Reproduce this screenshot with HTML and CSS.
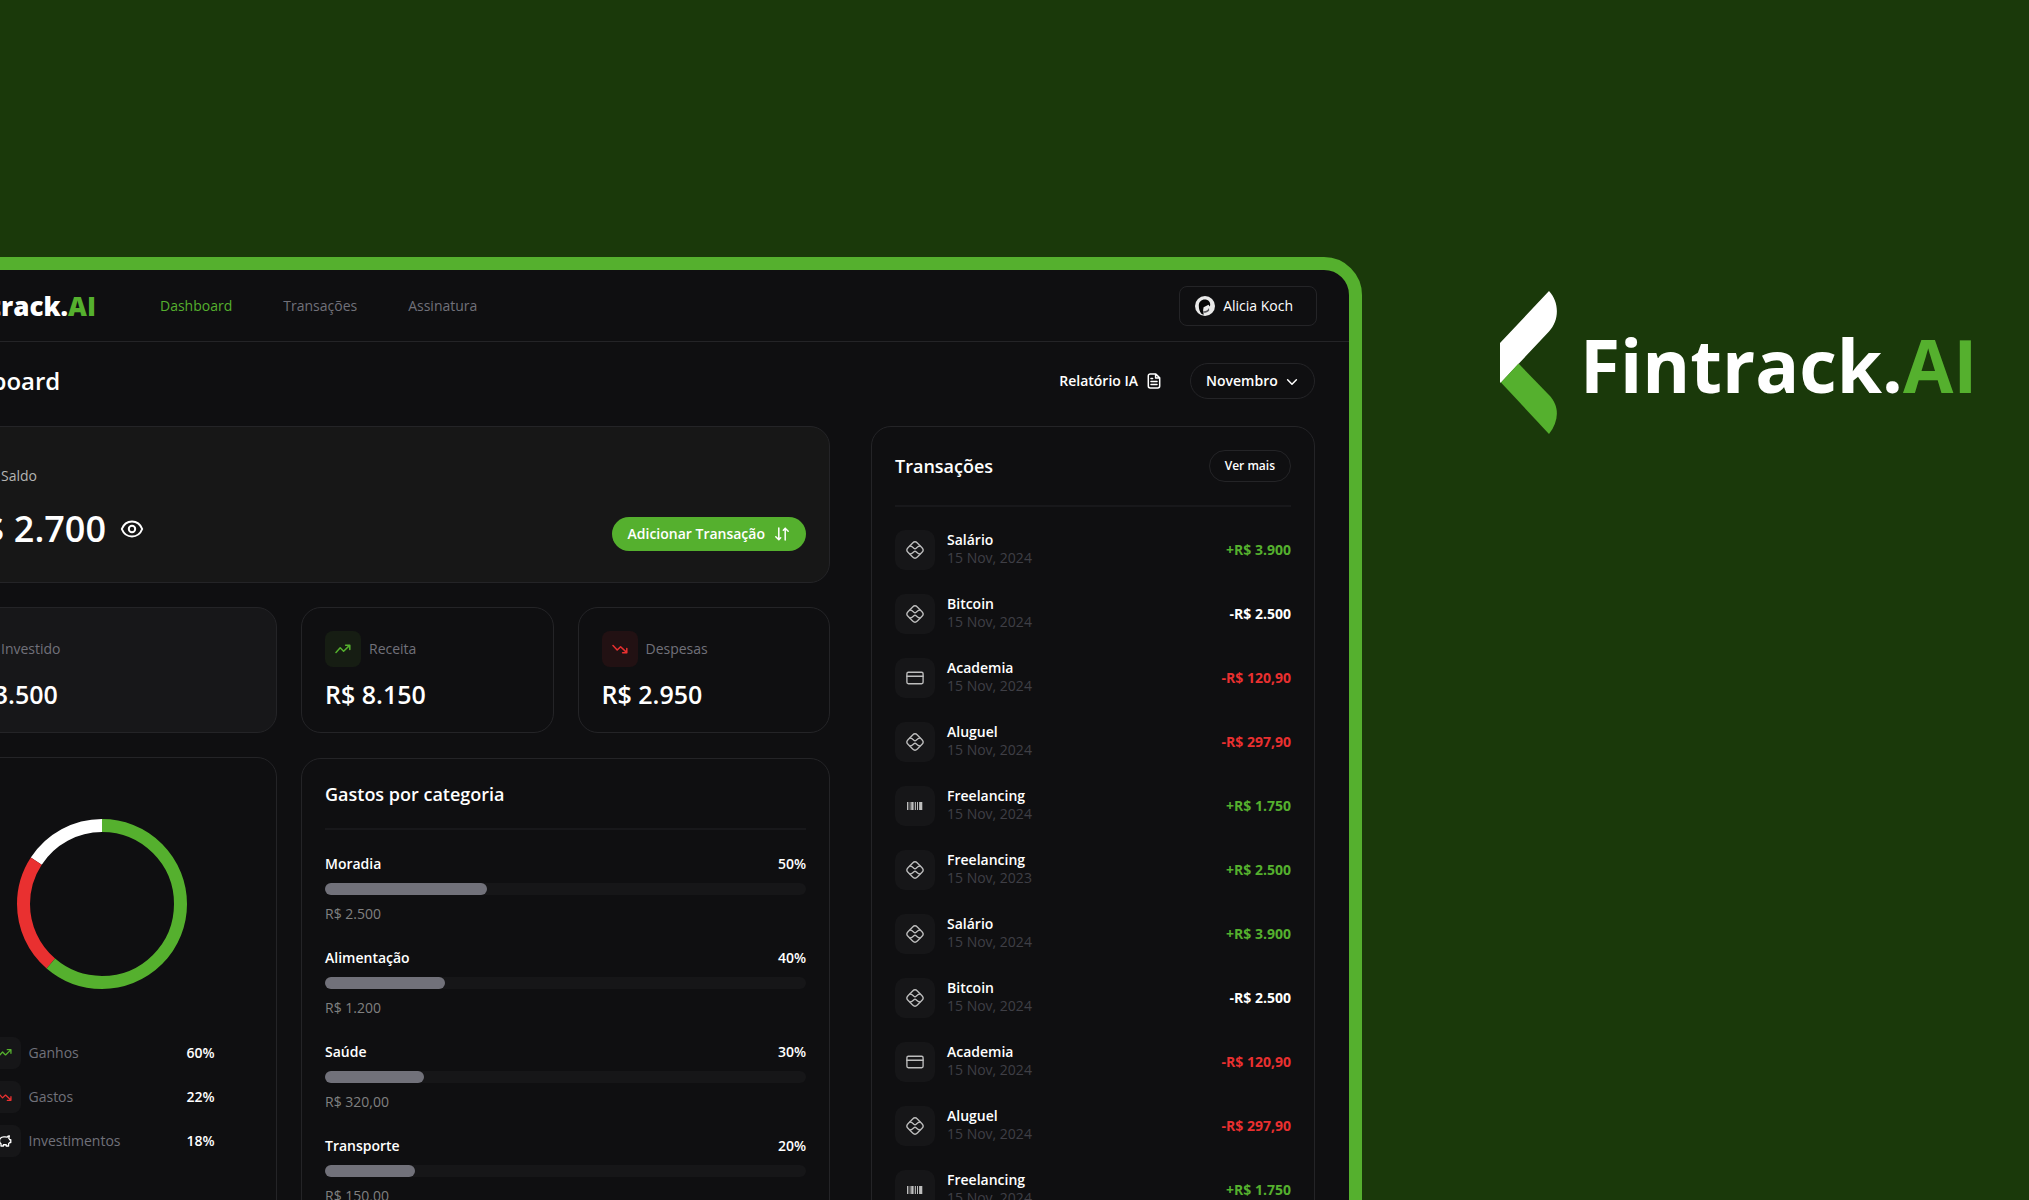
FILE: index.html
```html
<!DOCTYPE html>
<html lang="pt-BR">
<head>
<meta charset="utf-8">
<meta name="viewport" content="width=device-width, initial-scale=1">
<title>Fintrack.AI</title>
<link rel="stylesheet" href="styles.css">
</head>
<body>
<svg class="sprite" aria-hidden="true">
  <symbol id="i-up" viewBox="0 0 16 16"><path d="M1 11.5 5.2 6.8 8.6 10.2 14.6 4.4M10.6 4.2h4.2v4.2"/></symbol>
  <symbol id="i-down" viewBox="0 0 16 16"><path d="M1 4.5 5.2 9 8.6 5.8 14.6 11.4M10.6 11.8h4.2V7.6"/></symbol>
  <symbol id="i-pix" viewBox="0 0 20 20"><path d="M7.400 2.200a3.700 3.700 0 0 1 5.200 0l5.200 5.200a3.700 3.700 0 0 1 0 5.200l-5.200 5.200a3.700 3.700 0 0 1-5.200 0L2.200 12.600a3.700 3.700 0 0 1 0-5.200z"/><path d="M4.400 5.700c1.400 0 2.300.4 3.100 1.200l1.300 1.200c.7.6 1.700.6 2.400 0l1.300-1.200c.8-.8 1.700-1.200 3.100-1.200M4.400 14.300c1.400 0 2.300-.4 3.100-1.200l1.300-1.200c.7-.6 1.700-.6 2.400 0l1.300 1.200c.8.8 1.700 1.200 3.100 1.200"/></symbol>
  <symbol id="i-card" viewBox="0 0 20 20"><rect x="1" y="3.600" width="18" height="12.800" rx="1.600"/><path d="M1 8h18"/></symbol>
  <symbol id="i-bar" viewBox="0 0 18 18"><path stroke="none" fill="currentColor" d="M1 5h1.400v8H1zM3.700 5h.8v8h-.8zM5.200 5h2.400v8H5.200zM8.800 5h1.100v8H8.800zM11 5h1v8h-1zM13.100 5h3.200v8h-3.200z"/></symbol>
  <symbol id="i-pig" viewBox="0 0 16 16"><path d="M13 2.2c-1.2 0-2 .6-2.4 1.3C9.600 3.300 8 3.200 6.600 3.300 3.700 3.600 1.700 5.500 1.700 8c0 1.300.7 2.400 1.700 3.200v2.500h2.800v-1.400h3.200v1.400h2.700v-2.500c.5-.4.9-.9 1.200-1.500h1.300V6.600h-1.200c-.2-.7-.6-1.200-1.100-1.700z"/></symbol>
</svg>

<div class="stage">
  <div class="preview">
    <div class="window">
      <header class="topbar">
        <a class="logo" href="#">Fintrack.<span>AI</span></a>
        <nav class="nav">
          <a class="active" href="#">Dashboard</a>
          <a href="#">Transações</a>
          <a href="#">Assinatura</a>
        </nav>
        <button class="profile" type="button">
          <svg class="avatar" viewBox="0 0 20 20" aria-hidden="true"><circle cx="10" cy="10" r="10" fill="#e9e9e9"/><path d="M3.800 9.500C3.800 5.800 6.400 3.400 9.800 3.400s5.400 2.200 5.400 5.200c0 .9-.2 1.500-.5 2l-1.200-1.800-4.900 2.400-.5 3 .6 4.600-2-.9C4.600 16 3.800 13 3.800 9.500z" fill="#050505"/><path d="M8.200 15.200c2.200.4 4.400-.6 5.800-3.200l.2 2.400c-1.200 1.400-3.200 2.400-5.600 2.400z" fill="#55555a"/></svg>
          Alicia Koch
        </button>
      </header>

      <main class="content">
        <div class="heading">
          <h1>Dashboard</h1>
          <div class="actions">
            <button class="report" type="button">Relatório IA
              <svg class="icon" viewBox="0 0 16 16" aria-hidden="true"><path d="M9.800 1H4.200A1.900 1.900 0 0 0 2.300 2.900v10.200A1.900 1.900 0 0 0 4.200 15h7.600a1.900 1.900 0 0 0 1.900-1.900V4.900zM9.600 1.200V5h4M5 5.600h1.600M5 8.400h6M5 11.400h6"/></svg>
            </button>
            <div class="month">
              <select aria-label="Mês"><option>Novembro</option></select>
              <svg class="chevron" viewBox="0 0 16 16" aria-hidden="true"><path d="M3.600 6.800 8 11.200l4.400-4.400"/></svg>
            </div>
          </div>
        </div>

        <div class="columns">
          <div class="main">
            <section class="card balance">
              <div class="label light"><span class="chip"></span>Saldo</div>
              <div class="balance-row">
                <strong class="total">R$ 2.700</strong>
                <button class="eye" type="button" aria-label="Ocultar saldo">
                  <svg viewBox="0 0 24 24" aria-hidden="true"><path d="M1.800 12C3.800 7 7.600 4.500 12 4.500S20.200 7 22.200 12c-2 5-5.800 7.500-10.200 7.500S3.800 17 1.800 12z"/><circle cx="12" cy="12" r="3.200"/></svg>
                </button>
                <button class="add" type="button">Adicionar Transação
                  <svg class="icon" viewBox="0 0 16 16" aria-hidden="true"><path d="M4.800 2v11.600M1.800 10.800l3 2.900 1.900-1.900M11.200 14V2.300M9.300 4.200l1.900-1.900 3 2.900"/></svg>
                </button>
              </div>
            </section>

            <div class="split">
              <div class="side">
                <section class="card stat raised">
                  <div class="label"><span class="chip"></span>Investido</div>
                  <strong>R$ 3.500</strong>
                </section>
                <section class="card summary">
                  <svg class="donut" viewBox="0 0 170 170" role="img" aria-label="Ganhos, gastos e investimentos">
                    <g fill="none" stroke-width="13" transform="rotate(-90 85 85)">
                      <path d="M0 0" />
                      <circle cx="85" cy="85" r="78.500" pathLength="1000" stroke="#fff" stroke-dasharray="0 842 158"/>
                      <circle cx="85" cy="85" r="78.500" pathLength="1000" stroke="#e93030" stroke-dasharray="0 613 229 158"/>
                      <circle cx="85" cy="85" r="78.500" pathLength="1000" stroke="#55b02e" stroke-dasharray="613 387"/>
                    </g>
                  </svg>
                  <ul class="legend">
                    <li><span class="chip green"><svg><use href="#i-up"/></svg></span>Ganhos<b>60%</b></li>
                    <li><span class="chip red"><svg><use href="#i-down"/></svg></span>Gastos<b>22%</b></li>
                    <li><span class="chip"><svg><use href="#i-pig"/></svg></span>Investimentos<b>18%</b></li>
                  </ul>
                </section>
              </div>

              <div class="flow">
                <div class="stats">
                  <section class="card stat">
                    <div class="label"><span class="chip green tint"><svg><use href="#i-up"/></svg></span>Receita</div>
                    <strong>R$ 8.150</strong>
                  </section>
                  <section class="card stat">
                    <div class="label"><span class="chip red tint"><svg><use href="#i-down"/></svg></span>Despesas</div>
                    <strong>R$ 2.950</strong>
                  </section>
                </div>
                <section class="card categories">
                  <h2>Gastos por categoria</h2>
                  <ul>
                    <li><div class="line"><span>Moradia</span><span>50%</span></div><div class="track"><div class="fill" style="width:33.7%"></div></div><p>R$ 2.500</p></li>
                    <li><div class="line"><span>Alimentação</span><span>40%</span></div><div class="track"><div class="fill" style="width:25%"></div></div><p>R$ 1.200</p></li>
                    <li><div class="line"><span>Saúde</span><span>30%</span></div><div class="track"><div class="fill" style="width:20.6%"></div></div><p>R$ 320,00</p></li>
                    <li><div class="line"><span>Transporte</span><span>20%</span></div><div class="track"><div class="fill" style="width:18.7%"></div></div><p>R$ 150,00</p></li>
                  </ul>
                </section>
              </div>
            </div>
          </div>

          <section class="card transactions">
            <div class="card-head"><h2>Transações</h2><button class="more" type="button">Ver mais</button></div>
            <ul>
              <li><span class="chip"><svg><use href="#i-pix"/></svg></span><div><h3>Salário</h3><p>15 Nov, 2024</p></div><b class="gain">+R$ 3.900</b></li>
              <li><span class="chip"><svg><use href="#i-pix"/></svg></span><div><h3>Bitcoin</h3><p>15 Nov, 2024</p></div><b>-R$ 2.500</b></li>
              <li><span class="chip"><svg><use href="#i-card"/></svg></span><div><h3>Academia</h3><p>15 Nov, 2024</p></div><b class="loss">-R$ 120,90</b></li>
              <li><span class="chip"><svg><use href="#i-pix"/></svg></span><div><h3>Aluguel</h3><p>15 Nov, 2024</p></div><b class="loss">-R$ 297,90</b></li>
              <li><span class="chip"><svg><use href="#i-bar"/></svg></span><div><h3>Freelancing</h3><p>15 Nov, 2024</p></div><b class="gain">+R$ 1.750</b></li>
              <li><span class="chip"><svg><use href="#i-pix"/></svg></span><div><h3>Freelancing</h3><p>15 Nov, 2023</p></div><b class="gain">+R$ 2.500</b></li>
              <li><span class="chip"><svg><use href="#i-pix"/></svg></span><div><h3>Salário</h3><p>15 Nov, 2024</p></div><b class="gain">+R$ 3.900</b></li>
              <li><span class="chip"><svg><use href="#i-pix"/></svg></span><div><h3>Bitcoin</h3><p>15 Nov, 2024</p></div><b>-R$ 2.500</b></li>
              <li><span class="chip"><svg><use href="#i-card"/></svg></span><div><h3>Academia</h3><p>15 Nov, 2024</p></div><b class="loss">-R$ 120,90</b></li>
              <li><span class="chip"><svg><use href="#i-pix"/></svg></span><div><h3>Aluguel</h3><p>15 Nov, 2024</p></div><b class="loss">-R$ 297,90</b></li>
              <li><span class="chip"><svg><use href="#i-bar"/></svg></span><div><h3>Freelancing</h3><p>15 Nov, 2024</p></div><b class="gain">+R$ 1.750</b></li>
            </ul>
          </section>
        </div>
      </main>
    </div>
  </div>

  <aside class="brand">
    <svg class="mark" viewBox="0 0 57 143" aria-hidden="true"><path fill="#fff" d="M0 52 49 0C59.500 11 59.500 29.500 49 40.500L1 91.500H0z"/><path fill="#55b02e" d="M1 91.500 18.500 72.500 49 104C59.500 115 59.500 129 49 143z"/></svg>
    <div class="wordmark">Fintrack.<span>AI</span></div>
  </aside>
</div>
</body>
</html>
```
FILE: styles.css
```css
:root {
  --forest: #1a390a;
  --green: #55b02e;
  --red: #e93030;
  --ink: #0f0f11;
  --raised: #171719;
  --border: #242427;
  --line: #18181b;
  --muted: #71717a;
  --faint: #3f3f46;
}

* { box-sizing: border-box; margin: 0; padding: 0; }

body {
  background: var(--forest);
  color: #fff;
  font: 400 14px/20px "Open Sans", "Noto Sans", sans-serif;
}

ul { list-style: none; }
a { color: inherit; text-decoration: none; }
svg { display: block; flex: none; fill: none; stroke: currentColor; stroke-width: 1.5; stroke-linecap: round; stroke-linejoin: round; }
button, select { font: inherit; color: inherit; background: none; border: 0; cursor: pointer; }
.sprite { position: absolute; width: 0; height: 0; }

.stage {
  display: grid;
  grid-template-columns: minmax(0, 1fr) 667px;
  height: 100vh;
  overflow: hidden;
}

/* App window, bleeding off the left and bottom edges */
.preview { display: flex; justify-content: flex-end; align-items: flex-start; padding-top: 257px; }
.window {
  flex: none;
  width: calc(100% + 113px);
  background: var(--ink);
  border: 13px solid var(--green);
  border-radius: 38px;
}

.topbar {
  display: flex;
  align-items: center;
  height: 72px;
  padding: 0 32px 0 33px;
  border-bottom: 1px solid var(--border);
}
.logo { display: flex; justify-content: flex-end; width: 163px; font-size: 26px; line-height: 32px; font-weight: 800; }
.logo span, .wordmark span { color: var(--green); }
.nav { display: flex; gap: 51px; margin-left: 64px; color: var(--muted); }
.nav .active { color: var(--green); font-weight: 500; }
.profile {
  display: flex;
  align-items: center;
  gap: 8px;
  height: 40px;
  margin-left: auto;
  padding: 0 23px 0 15px;
  border: 1px solid var(--border);
  border-radius: 8px;
  font-weight: 500;
}
.avatar { width: 20px; height: 20px; stroke: none; }

.content { padding: 21px 34px 33px 33px; }
.heading { display: flex; justify-content: space-between; align-items: center; height: 36px; margin-bottom: 27px; }
h1 { font-size: 24px; line-height: 32px; font-weight: 600; }
h2 { font-size: 18px; line-height: 24px; font-weight: 600; }
.actions { display: flex; align-items: center; gap: 28px; font-weight: 600; }
.report { display: flex; align-items: center; gap: 8px; }
.icon { width: 16px; height: 16px; }
.month { position: relative; }
.month select {
  appearance: none;
  height: 36px;
  padding: 0 36px 0 15px;
  border: 1px solid var(--border);
  border-radius: 18px;
}
.chevron { position: absolute; right: 15px; top: 10px; width: 16px; height: 16px; pointer-events: none; }

.columns { display: grid; grid-template-columns: minmax(0, 1fr) 444px; gap: 41px; }
.card { border: 1px solid var(--border); border-radius: 20px; padding: 23px; }
.main { display: flex; flex-direction: column; gap: 24px; }

.label { display: flex; align-items: center; gap: 8px; color: var(--muted); }
.label.light { color: #b4b4b4; }
.chip {
  display: grid;
  place-items: center;
  flex: none;
  width: 36px;
  height: 36px;
  border-radius: 8px;
  background: var(--raised);
  color: #fff;
}
.chip svg { width: 16px; height: 16px; }
.chip.green { color: var(--green); }
.chip.red { color: var(--red); }
.chip.green.tint { background: #161d13; }
.chip.red.tint { background: #221113; }

.balance { background: #171717; padding: 31px 23px; }
.balance-row { display: flex; align-items: center; margin-top: 12px; }
.total { min-width: 149px; text-align: right; font-size: 36px; line-height: 45px; font-weight: 600; }
.eye { margin-left: 14px; }
.eye svg { width: 24px; height: 24px; stroke-width: 2; }
.add {
  display: flex;
  align-items: center;
  align-self: flex-end;
  gap: 9px;
  height: 34px;
  margin-left: auto;
  padding: 0 16px;
  border-radius: 17px;
  background: var(--green);
  font-weight: 600;
}

.split { display: grid; grid-template-columns: minmax(0, 1fr) 529px; gap: 24px; flex: 1; }
.side, .flow { display: flex; flex-direction: column; gap: 24px; }
.stats { display: grid; grid-template-columns: 1fr 1fr; gap: 24px; }
.flow { gap: 25px; }
.stat strong { display: block; margin-top: 12px; font-size: 25px; line-height: 30px; font-weight: 600; }
.raised { background: var(--raised); }

.summary { flex: 1; display: flex; flex-direction: column; align-items: center; gap: 48px; padding: 61px 30px 23px 23px; }
.donut { width: 170px; height: 170px; stroke: none; stroke-linecap: butt; }
.legend { display: grid; gap: 12px; width: 226px; }
.legend li { display: flex; align-items: center; gap: 8px; color: var(--muted); }
.legend b { margin-left: auto; color: #fff; font-weight: 600; }
.legend .chip { width: 32px; height: 32px; background: #161618; }
.legend svg { width: 14px; height: 14px; }

.categories { flex: 1; }
.categories h2, .card-head { border-bottom: 2px solid var(--line); }
.categories h2 { padding-bottom: 22px; }
.categories ul { display: grid; gap: 24px; padding-top: 24px; }
.line { display: flex; justify-content: space-between; font-weight: 600; }
.track { height: 12px; margin: 9px 0; border-radius: 6px; background: #161618; }
.fill { height: 100%; border-radius: 6px; background: var(--muted); }
.categories p { color: #808080; }

.card-head { display: flex; justify-content: space-between; align-items: center; padding-bottom: 23px; }
.more { height: 32px; padding: 0 15px; border: 1px solid var(--border); border-radius: 16px; font-size: 12px; font-weight: 600; }
.transactions ul { display: grid; gap: 24px; padding-top: 23px; }
.transactions li { display: flex; align-items: center; gap: 12px; line-height: 18px; }
.transactions li div { padding-bottom: 2px; }
.transactions .chip { width: 40px; height: 40px; border-radius: 10px; background: #161618; color: #bdbdbd; }
.transactions .chip svg { width: 18px; height: 18px; }
.transactions h3 { font-size: 14px; font-weight: 600; }
.transactions p { color: var(--faint); }
.transactions b { margin-left: auto; font-weight: 700; }
.transactions .gain { color: var(--green); }
.transactions .loss { color: var(--red); }

.brand { display: flex; align-items: center; align-self: start; gap: 23px; padding: 291px 0 0 138px; }
.mark { width: 57px; height: 143px; stroke: none; }
.wordmark { padding-top: 4px; font-size: 73px; line-height: 80px; font-weight: 700; }
```
